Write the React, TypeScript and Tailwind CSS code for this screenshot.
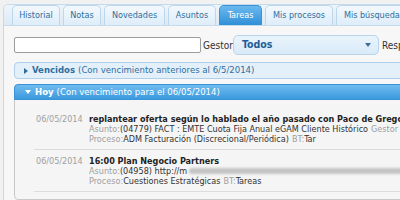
const tabs = [
  { label: 'Historial', w: 'w-[48px]' },
  { label: 'Notas', w: 'w-[38px]' },
  { label: 'Novedades', w: 'w-[61px]' },
  { label: 'Asuntos', w: 'w-[48px]' },
  { label: 'Tareas', w: 'w-[43px]', active: true },
  { label: 'Mis procesos', w: 'w-[68px]' },
  { label: 'Mis búsquedas', w: 'w-[76px]' },
];

function Task({ title, asunto, proceso, blurred }: { title: string; asunto: string; proceso: string; blurred?: boolean }) {
  return (
    <div className="flex border-b border-[#dcdcdc] pt-[6px] pb-[5px] ml-[19px] pl-[2px] leading-[10px] whitespace-nowrap">
      <div className="w-[53px] shrink-0 text-[#a0a0a0]">06/05/2014</div>
      <div className="flex flex-col">
        <div className="font-bold text-[#222] text-[9px]">{title}</div>
        <div className="flex items-center">
          <span className="text-[#a0a0a0]">Asunto:</span>
          <span className="text-[#333]">{asunto}</span>
          {blurred ? (
            <span className="inline-block w-[240px] h-[6px] ml-[2px] rounded-full bg-[#c4c4c4] blur-[1px]" />
          ) : (
            <span className="text-[#a0a0a0] ml-[3px]">Gestor</span>
          )}
        </div>
        <div>
          <span className="text-[#a0a0a0]">Proceso:</span>
          <span className="text-[#333]">{proceso}</span>
          <span className="text-[#a0a0a0] ml-[3px]">BT:</span>
          <span className="text-[#333]">{blurred ? 'Tareas' : 'Tar'}</span>
        </div>
      </div>
    </div>
  );
}

export default function App() {
  return (
    <div
      className="w-[400px] h-[200px] overflow-hidden bg-[#f1f1f1] pl-[3px] pt-[4px]"
      style={{ fontFamily: "'DejaVu Sans Condensed', 'DejaVu Sans', sans-serif" }}
    >
      <div className="h-[200px] w-[420px] border border-[#c5dbec] rounded-tl-[5px] bg-[#f7f7f7]">
        {/* tab strip */}
        <div className="h-[21px] flex items-end gap-[3px] pl-[8px] rounded-tl-[5px] bg-gradient-to-b from-[#eef5fb] to-[#dde9f4] border-b border-[#c5dbec]">
          {tabs.map((t) => (
            <div
              key={t.label}
              className={`${t.w} h-[20px] shrink-0 flex items-center justify-center rounded-t-[5px] border border-b-0 text-[9px] ${
                t.active
                  ? 'bg-gradient-to-b from-[#69b9ee] to-[#2f8fd8] border-[#3b90d2] text-white'
                  : 'bg-gradient-to-b from-[#f3f9fd] to-[#deedf9] border-[#bcd6ec] text-[#2e6e9e]'
              }`}
            >
              {t.label}
            </div>
          ))}
        </div>

        <div className="pl-[10px] pt-[9px]">
          {/* filter row */}
          <div className="flex items-center whitespace-nowrap text-[10px] text-[#333]">
            <div className="w-[187px] h-[16px] shrink-0 bg-white border border-[#9c9c9c] rounded-[2px]" />
            <span className="ml-[2px] w-[30px] shrink-0">Gestor</span>
            <div className="w-[146px] h-[20px] shrink-0 flex items-center justify-between pl-[8px] pr-[7px] rounded-[5px] border border-[#b9d3ea] bg-gradient-to-b from-[#eaf4fc] to-[#d9eaf8]">
              <span className="font-bold text-[#1d5d95] text-[10.5px]">Todos</span>
              <svg width="6" height="4" viewBox="0 0 6 4"><path d="M0 0h6L3 4z" fill="#3a6e9a" /></svg>
            </div>
            <span className="ml-[3px] shrink-0">Responsable</span>
          </div>

          {/* Vencidos */}
          <div className="mt-[7px] h-[17px] flex items-center pl-[9px] rounded-[4px] border border-[#aed0ec] bg-[#e3f0fa] text-[9.5px] text-[#2e6e9e] whitespace-nowrap">
            <svg width="4" height="6" viewBox="0 0 4 6" className="mr-[4px]"><path d="M0 0l4 3-4 3z" fill="#2e6e9e" /></svg>
            <span className="font-bold mr-[3px]">Vencidos</span>
            <span>(Con vencimiento anteriores al 6/5/2014)</span>
          </div>

          {/* Hoy */}
          <div className="mt-[5px] rounded-[4px] border border-[#c8c8c8] bg-[#f5f5f5] h-[116px]">
            <div className="h-[16px] -m-px mb-0 flex items-center pl-[10px] rounded-t-[4px] border border-[#3a92d8] bg-gradient-to-b from-[#6fbcef] to-[#3a99de] text-[9.5px] text-white whitespace-nowrap">
              <svg width="6" height="4" viewBox="0 0 6 4" className="mr-[4px]"><path d="M0 0h6L3 4z" fill="#fff" /></svg>
              <span className="font-bold mr-[3px]">Hoy</span>
              <span>(Con vencimiento para el 06/05/2014)</span>
            </div>
            <div className="pt-[8px] text-[9px]">
              <Task
                title="replantear oferta según lo hablado el año pasado con Paco de Gregorio"
                asunto="(04779) FACT : EMTE Cuota Fija Anual eGAM Cliente Histórico"
                proceso="ADM Facturación (Discrecional/Periódica)"
              />
              <Task
                title="16:00 Plan Negocio Partners"
                asunto="(04958) http://m"
                proceso="Cuestiones Estratégicas"
                blurred
              />
            </div>
          </div>
        </div>
      </div>
    </div>
  );
}
